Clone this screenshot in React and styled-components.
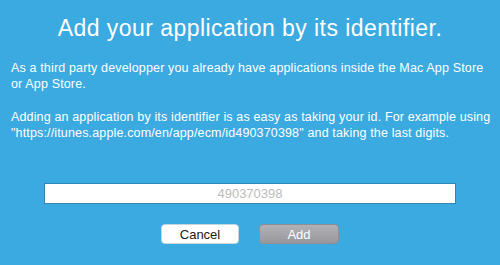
import React from 'react'
import styled, { createGlobalStyle } from 'styled-components'

const GlobalStyle = createGlobalStyle`
  html, body {
    margin: 0;
    padding: 0;
    background: #3baae1;
  }
  body {
    font-family: 'Liberation Sans', Arial, sans-serif;
    -webkit-font-smoothing: antialiased;
  }
`

const Panel = styled.div`
  width: 500px;
  height: 265px;
  box-sizing: border-box;
  background: #3baae1;
  color: #fff;
  padding: 13px 4px 0 11px;
  display: flex;
  flex-direction: column;
`

const Title = styled.h1`
  margin: 0 7px 0 0;
  font-size: 23px;
  line-height: 30px;
  font-weight: 400;
  text-align: center;
  letter-spacing: 0.45px;
`

const Text = styled.p`
  margin: ${(p) => p.$top}px 0 0;
  font-size: 12.5px;
  line-height: 16px;
  letter-spacing: 0.15px;
`

const Field = styled.input`
  box-sizing: border-box;
  align-self: center;
  width: 412px;
  height: 21px;
  margin: 42px 7px 0 0;
  border: 1px solid #2f86b8;
  background: #fff;
  text-align: center;
  font-family: inherit;
  font-size: 13px;
  padding: 0;
  outline: none;

  &::placeholder {
    color: #bbbbbb;
  }
`

const Buttons = styled.div`
  display: flex;
  justify-content: center;
  gap: 20px;
  margin: 20px 7px 0 0;
`

const Button = styled.button`
  box-sizing: border-box;
  width: ${(p) => (p.$primary ? 80 : 78)}px;
  height: 20px;
  border-radius: 4px;
  font-family: inherit;
  font-size: 13px;
  padding: 0;
  border: 1px solid ${(p) => (p.$primary ? '#8e8e93' : '#c9d4dc')};
  background: ${(p) =>
    p.$primary ? 'linear-gradient(#b2b2b6, #98989c)' : '#fff'};
  color: ${(p) => (p.$primary ? '#ffffff' : '#1a1a1a')};
`

export default function App() {
  return (
    <>
      <GlobalStyle />
      <Panel>
        <Title>Add your application by its identifier.</Title>
        <Text $top={17}>
          As a third party developper you already have applications inside the
          Mac App Store or App Store.
        </Text>
        <Text $top={17}>
          Adding an application by its identifier is as easy as taking your id.
          For example using "https://itunes.apple.com/en/app/ecm/id490370398" and
          taking the last digits.
        </Text>
        <Field placeholder="490370398" />
        <Buttons>
          <Button>Cancel</Button>
          <Button $primary>Add</Button>
        </Buttons>
      </Panel>
    </>
  )
}
